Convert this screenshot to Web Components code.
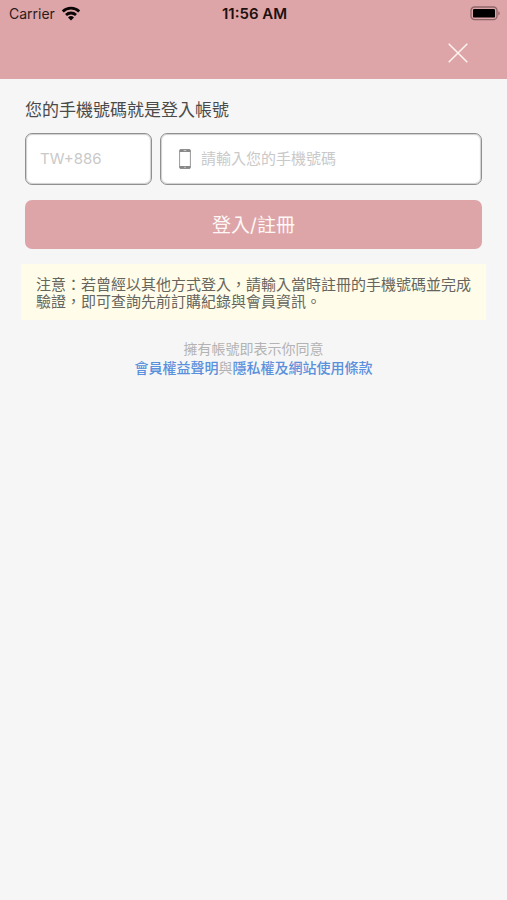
<!DOCTYPE html>
<html lang="zh-Hant-TW">
<head>
<meta charset="utf-8">
<meta name="viewport" content="width=device-width, initial-scale=1">
<title>登入/註冊</title>
<style>
body {
  margin: 0;
  min-height: 100vh;
  background: #f6f6f6;
  color: #4a4a4a;
  font-family: Inter, "Noto Sans CJK TC", sans-serif;
  --brand: #dda5a8;
}
</style>
</head>
<body>
<login-page></login-page>

<script>
function define(name, html) {
  const template = document.createElement('template');
  template.innerHTML = html;
  customElements.define(name, class extends HTMLElement {
    constructor() {
      super();
      this.attachShadow({ mode: 'open' }).append(template.content.cloneNode(true));
    }
  });
}

define('status-bar', `
<style>
  :host { display: grid; grid-template-columns: 1fr auto 1fr; align-items: center; height: 27px; padding: 0 7px 0 9px; color: #2b1b1c; font-size: 14px; line-height: 20px; }
  .left { display: flex; align-items: center; gap: 6px; }
  .battery { justify-self: end; }
  time { font-size: 15px; font-weight: 600; color: #20100f; }
  svg { display: block; }
</style>
<span class="left">Carrier
  <svg width="20" height="15" viewBox="0 0 20 15" fill="none" stroke="#0c0505" stroke-width="2.8" aria-label="Wi-Fi">
    <path d="M1.8 5.4a11.8 11.8 0 0 1 16.4 0"/>
    <path d="M5 9a7.2 7.2 0 0 1 10 0"/>
    <path d="M10 14.4 7 11.4a4.3 4.3 0 0 1 6 0Z" fill="#0c0505" stroke="none"/>
  </svg>
</span>
<time>11:56 AM</time>
<svg class="battery" width="30" height="15" viewBox="0 0 30 15" aria-label="電池">
  <rect x="1" y="1" width="26" height="12.6" rx="3.6" fill="none" stroke="#8f6668" stroke-width="1.3"/>
  <rect x="3" y="3" width="22" height="8.6" rx="1.2" fill="#000"/>
  <path d="M28.3 5.2c1.9.6 1.9 3.6 0 4.2Z" fill="#8f6668"/>
</svg>`);

define('nav-bar', `
<style>
  :host { display: flex; justify-content: flex-end; align-items: center; height: 52px; padding: 0 33px; }
  button { display: grid; place-items: center; width: 32px; height: 32px; padding: 0; border: 0; background: none; cursor: pointer; }
</style>
<button type="button" aria-label="關閉">
  <svg width="20" height="20" viewBox="0 0 20 20" fill="none" stroke="#fff4f0" stroke-width="1.5"><path d="M.7.7 19.3 19.3M19.3.7.7 19.3"/></svg>
</button>`);

define('field-box', `
<style>
  :host { display: flex; align-items: center; box-sizing: border-box; gap: 10px; height: 52px; padding: 0 14px; border: 1px solid #909090; border-radius: 7px; background: #fff; box-shadow: inset 0 0 1px 1px #d0d0d0; }
  ::slotted(input) { flex: 1; min-width: 0; width: 100%; padding: 0; border: 0; outline: 0; background: none; color: #4a4a4a; font: inherit; font-size: 15px; line-height: 22px; }
</style>
<slot name="icon"></slot><slot></slot>`);

define('phone-icon', `
<style>:host { display: block; } svg { display: block; }</style>
<svg width="12" height="20" viewBox="0 0 12 20" aria-hidden="true">
  <rect x=".6" y=".6" width="10.8" height="18.8" rx="1.2" fill="#fff" stroke="#9a9a9a" stroke-width="1"/>
  <path d="M.5 1.5Q.5.3 1.7.3h8.6q1.2 0 1.2 1.2V3H.5ZM.5 17h11v1.5q0 1.2-1.2 1.2H1.7Q.5 19.7.5 18.5Z" fill="#888"/>
  <path d="M4.6 1.6h2.8M5.2 18.3h1.6" stroke="#ddd" stroke-width=".8"/>
</svg>`);

define('login-form', `
<style>
  form { display: block; }
  .title { display: block; font-size: 17px; line-height: 24px; margin: 0 0 11px; }
  .fields { display: grid; grid-template-columns: 127px 1fr; gap: 8px; margin-bottom: 15px; }
  .phone { padding-left: 18px; }
  input::placeholder { color: #c9c9c9; opacity: 1; }
  button { display: block; width: 100%; height: 49px; padding: 2px 0 0; border: 0; border-radius: 7px; background: var(--brand); color: #fff8f6; font: inherit; font-size: 19px; line-height: 28px; cursor: pointer; }
</style>
<form>
  <label class="title" for="phone">您的手機號碼就是登入帳號</label>
  <div class="fields">
    <field-box><input type="text" aria-label="國碼" placeholder="TW+886"></field-box>
    <field-box class="phone"><phone-icon slot="icon"></phone-icon><input id="phone" type="tel" placeholder="請輸入您的手機號碼"></field-box>
  </div>
  <button type="button">登入/註冊</button>
</form>`);

define('notice-box', `
<style>
  :host { display: block; margin: 15px -4px 0; padding: 12px 14px 10px 15px; background: #fffde9; color: #66655d; font-size: 15px; line-height: 17px; }
</style>
<slot></slot>`);

define('terms-note', `
<style>
  :host { display: block; margin-top: 19px; text-align: center; color: #b3b3b3; font-size: 14px; line-height: 19px; }
  p { margin: 0; }
  a { color: #5a90dc; font-weight: 500; text-decoration: none; }
</style>
<p>擁有帳號即表示你同意</p>
<p><a href="#rights">會員權益聲明</a>與<a href="#privacy">隱私權及網站使用條款</a></p>`);

define('login-page', `
<style>
  :host { display: block; }
  header { background: var(--brand); }
  main { padding: 19px 25px; }
</style>
<header><status-bar></status-bar><nav-bar></nav-bar></header>
<main>
  <login-form></login-form>
  <notice-box>注意：若曾經以其他方式登入，請輸入當時註冊的手機號碼並完成驗證，即可查詢先前訂購紀錄與會員資訊。</notice-box>
  <terms-note></terms-note>
</main>`);
</script>
</body>
</html>
